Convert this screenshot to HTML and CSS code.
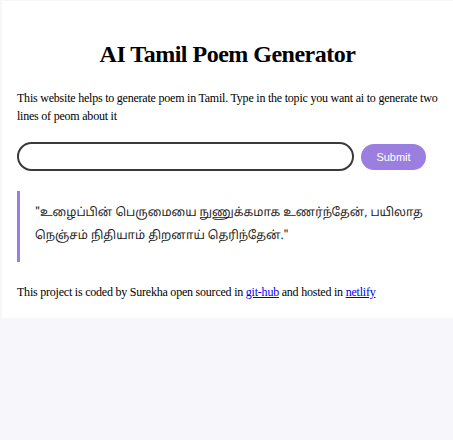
FILE: index.html
```html
<!DOCTYPE html>
<html lang="en">
<head>
<meta charset="utf-8">
<title>AI Tamil Poem Generator</title>
<link rel="stylesheet" href="styles.css">
</head>
<body>
<div class="container">
  <h1 class="title">AI Tamil Poem Generator</h1>
  <p class="intro">This website helps to generate poem in Tamil. Type in the topic you want ai to generate two lines of peom about it</p>
  <form class="search">
    <input class="search-input" type="text">
    <button class="search-button" type="button">Submit</button>
  </form>
  <div class="poem">"உழைப்பின் பெருமையை நுணுக்கமாக உணர்ந்தேன், பயிலாத நெஞ்சம் நிதியாம் திறனாய் தெரிந்தேன்."</div>
  <p class="footer">This project is coded by Surekha open sourced in <a href="#">git-hub</a> and hosted in <a href="#">netlify</a></p>
</div>
</body>
</html>
```
FILE: styles.css
```css
html, body {
  margin: 0;
  padding: 0;
}
body {
  background: #f7f7fb;
  font-family: "Liberation Serif", "Times New Roman", serif;
  color: #000;
}
.container {
  background: #fff;
  margin: 1px 0 0 2px;
  padding: 40px 15px 18px 15px;
}
.title {
  text-align: center;
  font-size: 24px;
  letter-spacing: -0.5px;
  font-weight: bold;
  margin: 0 0 21px;
}
.intro {
  font-size: 12px;
  letter-spacing: -0.22px;
  line-height: 18px;
  margin: 0 0 17px;
}
.search {
  display: flex;
  align-items: center;
  gap: 7px;
  margin: 0;
}
.search-input {
  width: 337px;
  height: 29px;
  box-sizing: border-box;
  border: 2px solid #3a3a3a;
  border-radius: 15px;
  background: #fff;
  margin: 0;
  padding: 0 10px;
}
.search-button {
  width: 65px;
  height: 26px;
  border: none;
  border-radius: 13px;
  background: #9b7fe0;
  color: #fff;
  font-family: "Liberation Sans", Arial, sans-serif;
  font-size: 11px;
  padding: 0;
}
.poem {
  margin: 20px 0 0;
  border-left: 3px solid #9b7fe0;
  padding: 12px 0 13px 15px;
  font-family: "Noto Sans Tamil", "Noto Sans", "Liberation Sans", sans-serif;
  font-size: 11.8px;
  text-rendering: geometricPrecision;
  line-height: 23px;
  color: #222;
}
.footer {
  font-size: 12px;
  letter-spacing: -0.22px;
  margin: 23px 0 0;
}
.footer a {
  color: #00e;
}
```
